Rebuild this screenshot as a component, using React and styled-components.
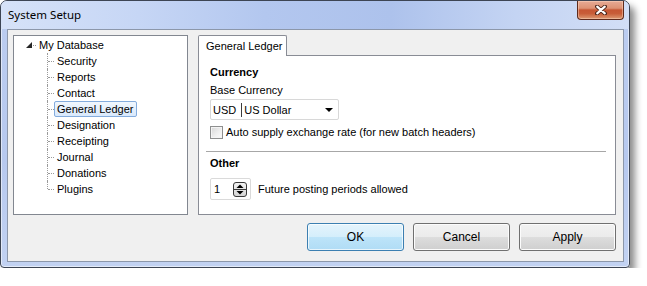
import React from 'react';
import styled, { createGlobalStyle } from 'styled-components';

const GlobalStyle = createGlobalStyle`
	body {
		margin: 0;
		background: #ffffff;
		font-family: "Liberation Sans", Arial, sans-serif;
		font-size: 11px;
		color: #000;
	}
	* {
		box-sizing: border-box;
	}
`;

const Window = styled.div`
	width: 630px;
	height: 268px;
	display: flex;
	flex-direction: column;
	border: 1px solid #3d4554;
	border-radius: 7px 7px 4px 4px;
	background: linear-gradient(180deg, #bccdf0 0%, #b7c9ef 60%, #c2d2f2 100%);
	box-shadow: inset 0 0 0 1px rgba(255, 255, 255, 0.55), 5px 6px 7px rgba(0, 0, 0, 0.45);
`;

const TitleBar = styled.div`
	height: 28px;
	flex: none;
	display: flex;
	justify-content: space-between;
	align-items: flex-start;
	padding: 0 5px 0 7px;
	border-radius: 6px 6px 0 0;
	background: linear-gradient(90deg, #d6e2f8 0%, #c6d6f5 22%, #b3c7ef 42%, #adc2ec 62%, #c4d4f3 82%, #d2def6 100%);
`;

const Title = styled.span`
	margin-top: 6px;
	font-family: "Noto Sans", "Liberation Sans", sans-serif;
	font-size: 11.5px;
	line-height: 16px;
	color: #000;
`;

const CloseButton = styled.div`
	width: 47px;
	height: 19px;
	display: flex;
	align-items: center;
	justify-content: center;
	border: 1px solid #5e2a1c;
	border-top: none;
	border-radius: 0 0 4px 4px;
	background: linear-gradient(180deg, #e7ab95 0%, #dd9274 40%, #c65633 50%, #c85d38 70%, #dd9a72 100%);
	box-shadow: inset 0 0 0 1px rgba(255, 220, 200, 0.45);
`;

const Client = styled.div`
	flex: none;
	height: 233px;
	margin: 0 5px 5px 6px;
	display: flex;
	flex-direction: column;
	padding: 5px 7px 0 5px;
	border: 1px solid #8c97aa;
	background: #f0f0f0;
`;

const MainRow = styled.div`
	display: flex;
	gap: 10px;
	height: 180px;
`;

const TreePanel = styled.div`
	width: 175px;
	border: 1px solid #828790;
	background: #fff;
	padding-top: 1px;
`;

const TreeList = styled.ul`
	list-style: none;
	margin: 0;
	padding: 0;
`;

const RootRow = styled.li`
	height: 16px;
	display: flex;
	align-items: center;
	padding-left: 12px;
`;

const Connector = styled.span`
	width: 3px;
	margin-left: 1px;
	border-top: 1px dotted #9a9a9a;
`;

const Children = styled.ul`
	list-style: none;
	margin: 0 0 0 33px;
	padding: 0;
`;

const ChildRow = styled.li`
	position: relative;
	height: 16px;
	display: flex;
	align-items: center;
	padding-left: 7px;
	&::before {
		content: '';
		position: absolute;
		left: 0;
		top: 0;
		bottom: ${p => (p.$last ? '8px' : '0')};
		border-left: 1px dotted #9a9a9a;
	}
	&::after {
		content: '';
		position: absolute;
		left: 1px;
		top: 8px;
		width: 6px;
		border-top: 1px dotted #9a9a9a;
	}
`;

const NodeLabel = styled.span`
	height: 16px;
	line-height: 14px;
	padding: 0 3px 0 2px;
	border: 1px solid ${p => (p.$selected ? '#84acdd' : 'transparent')};
	border-radius: 2px;
	background: ${p => (p.$selected ? 'linear-gradient(180deg, #f1f7fe, #d9e9fc)' : 'transparent')};
	white-space: nowrap;
`;

const TabArea = styled.div`
	width: 418px;
	display: flex;
	flex-direction: column;
`;

const TabStrip = styled.div`
	display: flex;
	height: 21px;
	flex: none;
	position: relative;
	z-index: 1;
	margin-bottom: -1px;
`;

const Tab = styled.div`
	width: 89px;
	height: 21px;
	padding-left: 7px;
	line-height: 20px;
	border: 1px solid #898c95;
	border-bottom: none;
	border-radius: 2px 2px 0 0;
	background: #fff;
`;

const TabPanel = styled.div`
	flex: 1;
	border: 1px solid #898c95;
	background: #fff;
	display: flex;
	flex-direction: column;
`;

const Section = styled.div`
	padding: ${p => p.$top}px 11px 0 11px;
	display: flex;
	flex-direction: column;
	align-items: flex-start;
`;

const Heading = styled.div`
	font-weight: bold;
	line-height: 14px;
`;

const FieldLabel = styled.div`
	margin-top: 4px;
	line-height: 14px;
`;

const Combo = styled.div`
	margin-top: 2px;
	width: 129px;
	height: 21px;
	display: flex;
	align-items: center;
	padding: 0 5px 0 2px;
	border: 1px solid #d8d8d8;
	border-radius: 2px;
	background: #fff;
`;

const ComboCode = styled.span`
	padding-right: 5px;
	line-height: 14px;
	border-right: 1px solid #3c3c3c;
`;

const ComboValue = styled.span`
	padding-left: 2px;
	flex: 1;
`;

const Arrow = styled.span`
	width: 0;
	height: 0;
	border-left: 4px solid transparent;
	border-right: 4px solid transparent;
	border-top: 4px solid #000;
`;

const CheckRow = styled.label`
	margin-top: 5px;
	display: flex;
	align-items: center;
	gap: 3px;
	line-height: 14px;
`;

const CheckBox = styled.span`
	width: 13px;
	height: 13px;
	border: 1px solid #8e8f8f;
	background: linear-gradient(135deg, #d6d6d6 0%, #f0f0f0 60%, #fbfbfb 100%);
	box-shadow: inset 0 0 0 1px #f4f4f4;
`;

const Divider = styled.div`
	margin: 12px 9px 0 7px;
	border-top: 1px solid #a7a7a7;
`;

const SpinRow = styled.div`
	margin-top: 8px;
	display: flex;
	align-items: center;
	gap: 7px;
`;

const SpinBox = styled.div`
	width: 41px;
	height: 22px;
	display: flex;
	align-items: center;
	justify-content: space-between;
	padding: 0 3px 0 3px;
	border: 1px solid #dadada;
	border-radius: 2px;
	background: #fff;
`;

const ButtonRow = styled.div`
	margin-top: 8px;
	display: flex;
	justify-content: flex-end;
	gap: 9px;
`;

const Button = styled.button`
	width: 97px;
	height: 28px;
	font-family: "Liberation Sans", Arial, sans-serif;
	font-size: 12px;
	color: #000;
	border-radius: 3px;
	border: 1px solid ${p => (p.$default ? '#3c7fb1' : '#707070')};
	background: ${p =>
		p.$default
			? 'linear-gradient(180deg, #e5f4fc 0%, #d4eefb 50%, #bde4f9 51%, #b0dcf5 100%)'
			: 'linear-gradient(180deg, #f2f2f2 0%, #ebebeb 50%, #dddddd 51%, #cfcfcf 100%)'};
	box-shadow: inset 0 0 0 1px ${p => (p.$default ? 'rgba(255, 255, 255, 0.7)' : '#fcfcfc')};
`;

const CloseGlyph = () => (
	<svg width="12" height="10" viewBox="0 0 12 10">
		<path d="M2 1.5 L10 8.5 M10 1.5 L2 8.5" stroke="#4a2418" strokeWidth="4" strokeLinecap="round" />
		<path d="M2.2 1.7 L9.8 8.3 M9.8 1.7 L2.2 8.3" stroke="#fff" strokeWidth="2.2" strokeLinecap="round" />
	</svg>
);

const Expanded = () => (
	<svg width="6" height="6" viewBox="0 0 6 6">
		<polygon points="6,0 6,6 0,6" fill="#262626" />
	</svg>
);

const SpinIcon = () => (
	<svg width="14" height="15" viewBox="0 0 14 15">
		<defs>
			<linearGradient id="spin" x1="0" y1="0" x2="0" y2="1">
				<stop offset="0" stopColor="#f4f4f4" />
				<stop offset="1" stopColor="#d4d4d4" />
			</linearGradient>
		</defs>
		<rect x="0.5" y="0.5" width="13" height="14" rx="2.5" fill="url(#spin)" stroke="#3a3a3a" />
		<line x1="1" y1="7.5" x2="13" y2="7.5" stroke="#3a3a3a" />
		<polygon points="3.5,6 10.5,6 7,2.5" fill="#000" />
		<polygon points="3.5,9 10.5,9 7,12.5" fill="#000" />
	</svg>
);

const nodes = ['Security', 'Reports', 'Contact', 'General Ledger', 'Designation', 'Receipting', 'Journal', 'Donations', 'Plugins'];

const App = () => {
	return (
		<>
			<GlobalStyle />
			<Window>
				<TitleBar>
					<Title>System Setup</Title>
					<CloseButton><CloseGlyph /></CloseButton>
				</TitleBar>
				<Client>
					<MainRow>
						<TreePanel>
							<TreeList>
								<RootRow>
									<Expanded />
									<Connector />
									<NodeLabel>My Database</NodeLabel>
								</RootRow>
								<li>
									<Children>
										{nodes.map((n, i) => (
											<ChildRow key={n} $last={i === nodes.length - 1}>
												<NodeLabel $selected={n === 'General Ledger'}>{n}</NodeLabel>
											</ChildRow>
										))}
									</Children>
								</li>
							</TreeList>
						</TreePanel>
						<TabArea>
							<TabStrip>
								<Tab>General Ledger</Tab>
							</TabStrip>
							<TabPanel>
								<Section $top={9}>
									<Heading>Currency</Heading>
									<FieldLabel>Base Currency</FieldLabel>
									<Combo>
										<ComboCode>USD</ComboCode>
										<ComboValue>US Dollar</ComboValue>
										<Arrow />
									</Combo>
									<CheckRow>
										<CheckBox />
										Auto supply exchange rate (for new batch headers)
									</CheckRow>
								</Section>
								<Divider />
								<Section $top={4}>
									<Heading>Other</Heading>
									<SpinRow>
										<SpinBox>
											<span>1</span>
											<SpinIcon />
										</SpinBox>
										Future posting periods allowed
									</SpinRow>
								</Section>
							</TabPanel>
						</TabArea>
					</MainRow>
					<ButtonRow>
						<Button $default>OK</Button>
						<Button>Cancel</Button>
						<Button>Apply</Button>
					</ButtonRow>
				</Client>
			</Window>
		</>
	);
};

export default App;
